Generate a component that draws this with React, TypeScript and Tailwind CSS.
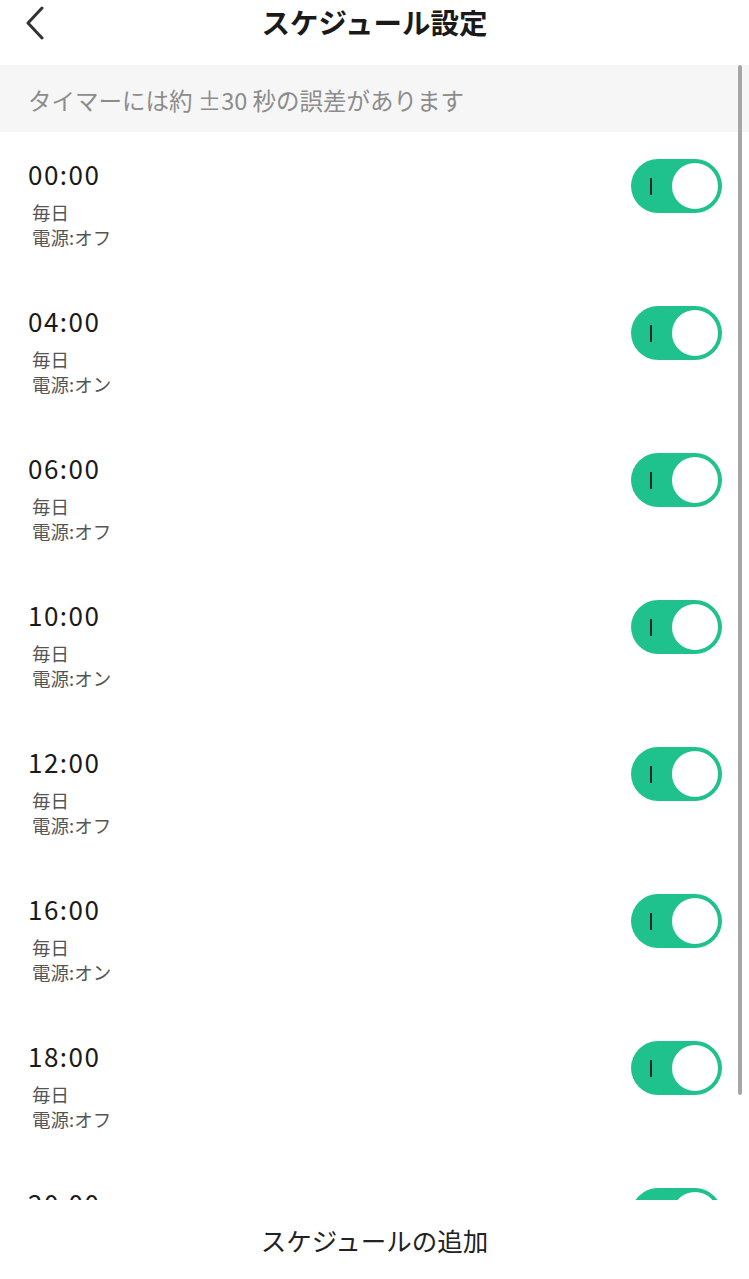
const schedules = [
  { time: "00:00", power: "オフ" },
  { time: "04:00", power: "オン" },
  { time: "06:00", power: "オフ" },
  { time: "10:00", power: "オン" },
  { time: "12:00", power: "オフ" },
  { time: "16:00", power: "オン" },
  { time: "18:00", power: "オフ" },
  { time: "20:00", power: "オン" },
];

const jp = { fontFamily: '"Noto Sans CJK JP", "Noto Sans", sans-serif' };

function Toggle() {
  return (
    <div className="relative mt-[27px] h-[54px] w-[91px] shrink-0 rounded-full bg-[#1fc28c]">
      <span className="absolute left-[19px] top-[19px] h-[17px] w-[2px] bg-[#13261f]" />
      <span className="absolute right-[2px] top-[2px] h-[50px] w-[50px] rounded-full border-2 border-[#1fc28c] bg-white" />
    </div>
  );
}

export default function App() {
  return (
    <div className="flex h-[1279px] w-[749px] flex-col overflow-hidden bg-white" style={jp}>
      <header className="grid h-[65px] shrink-0 grid-cols-[80px_1fr_80px] items-start pt-[5px]">
        <svg width="22" height="34" viewBox="0 0 22 34" className="ml-[24px] mt-[1px]">
          <polyline points="18,2 4,17 18,32" fill="none" stroke="#333" strokeWidth="3" strokeLinecap="round" strokeLinejoin="round" />
        </svg>
        <h1 className="text-center text-[28.5px] font-bold leading-[34px] text-[#1a1a1a]">スケジュール設定</h1>
        <div />
      </header>

      <div className="relative h-[1135px] shrink-0 overflow-hidden">
        <div className="flex h-[67px] items-center bg-[#f6f6f6] px-[28px] pt-[4px] text-[23.5px] text-[#8c8c8c]">
          タイマーには約 ±30 秒の誤差があります
        </div>
        {schedules.map((s) => (
          <div key={s.time} className="flex h-[147px] shrink-0 items-start justify-between pl-[28px] pr-[27px]">
            <div className="pt-[26px]">
              <div className="text-[26px] leading-[32px] tracking-[1.5px] text-[#1a1a1a]">{s.time}</div>
              <div className="mt-[10px] pl-[4px] text-[18.5px] leading-[25px] text-[#555]">
                <div>毎日</div>
                <div>電源:{s.power}</div>
              </div>
            </div>
            <Toggle />
          </div>
        ))}
        <div className="absolute right-[7px] top-0 h-[1030px] w-[4px] rounded-full bg-[#a6a6a6]" />
      </div>

      <footer className="flex flex-1 items-center justify-center pt-[2px] text-[25.5px] text-[#222]">
        スケジュールの追加
      </footer>
    </div>
  );
}
